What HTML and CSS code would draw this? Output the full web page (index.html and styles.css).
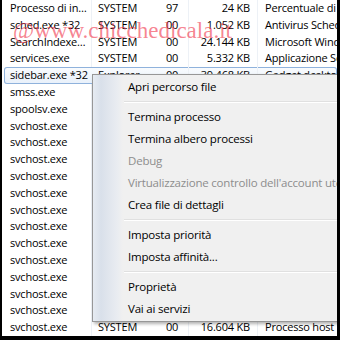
FILE: index.html
```html
<html>
    <head>
        <title>Task Manager - Processi</title>
        <link rel="stylesheet" href="styles.css">
    </head>
    <body>
        <div class="frame">
            <div class="list">
                <div class="row"><span class="c1">Processo di in…</span><span class="c2">SYSTEM</span><span class="c3">97</span><span class="c4">24 KB</span><span class="c5">Percentuale di tempo</span></div>
                <div class="row"><span class="c1">sched.exe *32</span><span class="c2">SYSTEM</span><span class="c3">00</span><span class="c4">1.052 KB</span><span class="c5">Antivirus Scheduler</span></div>
                <div class="row"><span class="c1">SearchIndexe…</span><span class="c2">SYSTEM</span><span class="c3">00</span><span class="c4">24.144 KB</span><span class="c5">Microsoft Windows Search</span></div>
                <div class="row"><span class="c1">services.exe</span><span class="c2">SYSTEM</span><span class="c3">00</span><span class="c4">5.332 KB</span><span class="c5">Applicazione Servizi</span></div>
                <div class="row sel"><span class="c1">sidebar.exe *32</span><span class="c2">Explorer</span><span class="c3">00</span><span class="c4">39.468 KB</span><span class="c5">Gadget desktop</span></div>
                <div class="row"><span class="c1">smss.exe</span><span class="c2">SYSTEM</span><span class="c3">00</span><span class="c4">372 KB</span><span class="c5">Gestione sessioni</span></div>
                <div class="row"><span class="c1">spoolsv.exe</span><span class="c2">SYSTEM</span><span class="c3">00</span><span class="c4">6.120 KB</span><span class="c5">Spooler</span></div>
                <div class="row"><span class="c1">svchost.exe</span><span class="c2">SYSTEM</span><span class="c3">00</span><span class="c4">5.880 KB</span><span class="c5">Processo host</span></div>
                <div class="row"><span class="c1">svchost.exe</span><span class="c2">SYSTEM</span><span class="c3">00</span><span class="c4">4.212 KB</span><span class="c5">Processo host</span></div>
                <div class="row"><span class="c1">svchost.exe</span><span class="c2">SYSTEM</span><span class="c3">00</span><span class="c4">22.904 KB</span><span class="c5">Processo host</span></div>
                <div class="row"><span class="c1">svchost.exe</span><span class="c2">SYSTEM</span><span class="c3">00</span><span class="c4">3.016 KB</span><span class="c5">Processo host</span></div>
                <div class="row"><span class="c1">svchost.exe</span><span class="c2">SYSTEM</span><span class="c3">00</span><span class="c4">9.448 KB</span><span class="c5">Processo host</span></div>
                <div class="row"><span class="c1">svchost.exe</span><span class="c2">SYSTEM</span><span class="c3">00</span><span class="c4">2.764 KB</span><span class="c5">Processo host</span></div>
                <div class="row"><span class="c1">svchost.exe</span><span class="c2">SYSTEM</span><span class="c3">00</span><span class="c4">11.032 KB</span><span class="c5">Processo host</span></div>
                <div class="row"><span class="c1">svchost.exe</span><span class="c2">SYSTEM</span><span class="c3">00</span><span class="c4">1.848 KB</span><span class="c5">Processo host</span></div>
                <div class="row"><span class="c1">svchost.exe</span><span class="c2">SYSTEM</span><span class="c3">00</span><span class="c4">7.556 KB</span><span class="c5">Processo host</span></div>
                <div class="row"><span class="c1">svchost.exe</span><span class="c2">SYSTEM</span><span class="c3">00</span><span class="c4">3.392 KB</span><span class="c5">Processo host</span></div>
                <div class="row"><span class="c1">svchost.exe</span><span class="c2">SYSTEM</span><span class="c3">00</span><span class="c4">2.108 KB</span><span class="c5">Processo host</span></div>
                <div class="row"><span class="c1">svchost.exe</span><span class="c2">SYSTEM</span><span class="c3">00</span><span class="c4">4.976 KB</span><span class="c5">Processo host</span></div>
                <div class="row"><span class="c1">svchost.exe</span><span class="c2">SYSTEM</span><span class="c3">00</span><span class="c4">16.604 KB</span><span class="c5">Processo host per servizi</span></div>
            </div>

            <div class="watermark">@www.chicchedicala.it</div>

            <div class="menu">
                <div class="item">Apri percorso file</div>
                <div class="sep"></div>
                <div class="item">Termina processo</div>
                <div class="item">Termina albero processi</div>
                <div class="item off">Debug</div>
                <div class="item off">Virtualizzazione controllo dell'account utente</div>
                <div class="item">Crea file di dettagli</div>
                <div class="sep"></div>
                <div class="item">Imposta priorità</div>
                <div class="item">Imposta affinità...</div>
                <div class="sep"></div>
                <div class="item">Proprietà</div>
                <div class="item">Vai ai servizi</div>
            </div>
        </div>
    </body>
</html>
```

FILE: styles.css
```css
body {
    margin: 0;
    background: black;
}
.frame {
    position: relative;
    width: 340px;
    height: 340px;
    box-sizing: border-box;
    border-left: 2px solid black;
    border-right: 3px solid black;
    border-bottom: 4px solid black;
    background: white;
    overflow: hidden;
    font-family: "Open Sans", "Noto Sans", sans-serif;
    font-size: 11px;
    letter-spacing: -0.2px;
    color: #000;
}
.list {
    display: flex;
    flex-direction: column;
}
.row {
    display: grid;
    grid-template-columns: 90px 68px 29px 69px 1fr;
    height: 16.8px;
    line-height: 16.8px;
    white-space: nowrap;
}
.row span {
    overflow: hidden;
    box-sizing: border-box;
}
.c1 {
    padding-left: 8px;
    border-right: 1px solid #edf1f6;
}
.c2 {
    padding-left: 6px;
}
.c3 {
    padding-left: 6px;
    border-right: 1px solid #edf1f6;
}
.c4 {
    text-align: right;
    padding-right: 7px;
    border-right: 1px solid #edf1f6;
}
.c5 {
    padding-left: 7px;
}
.sel {
    grid-template-columns: 88px 68px 29px 69px 1fr;
    margin-left: 2px;
    border-radius: 3px;
    box-shadow: inset 0 0 0 1px #8fb2dc;
    background: linear-gradient(#fafcfe, #e8f0fa);
}
.sel .c1 {
    padding-left: 6px;
    border-right: none;
}
.watermark {
    position: absolute;
    left: 11px;
    top: 19px;
    font-family: "Liberation Serif", serif;
    font-size: 23px;
    line-height: 23px;
    letter-spacing: 0;
    color: rgba(240, 50, 72, 0.6);
    white-space: nowrap;
}
.menu {
    position: absolute;
    left: 90px;
    top: 74px;
    width: 260px;
    padding: 1px 0;
    border: 1px solid #979797;
    background: linear-gradient(to right, #e6ebf2 0px, #d9e0ea 8px, #e9ecf1 24px, #f0f0f0 30px);
    box-shadow: 2px 2px 3px rgba(0, 0, 0, 0.3);
    white-space: nowrap;
}
.item {
    height: 22px;
    line-height: 22px;
    padding-left: 35px;
    font-size: 11.5px;
}
.off {
    color: #8d8d8d;
}
.sep {
    height: 1px;
    margin: 3px 0 3px 31px;
    border-bottom: 1px solid #ffffff;
    background: #e0e0e0;
}
```
